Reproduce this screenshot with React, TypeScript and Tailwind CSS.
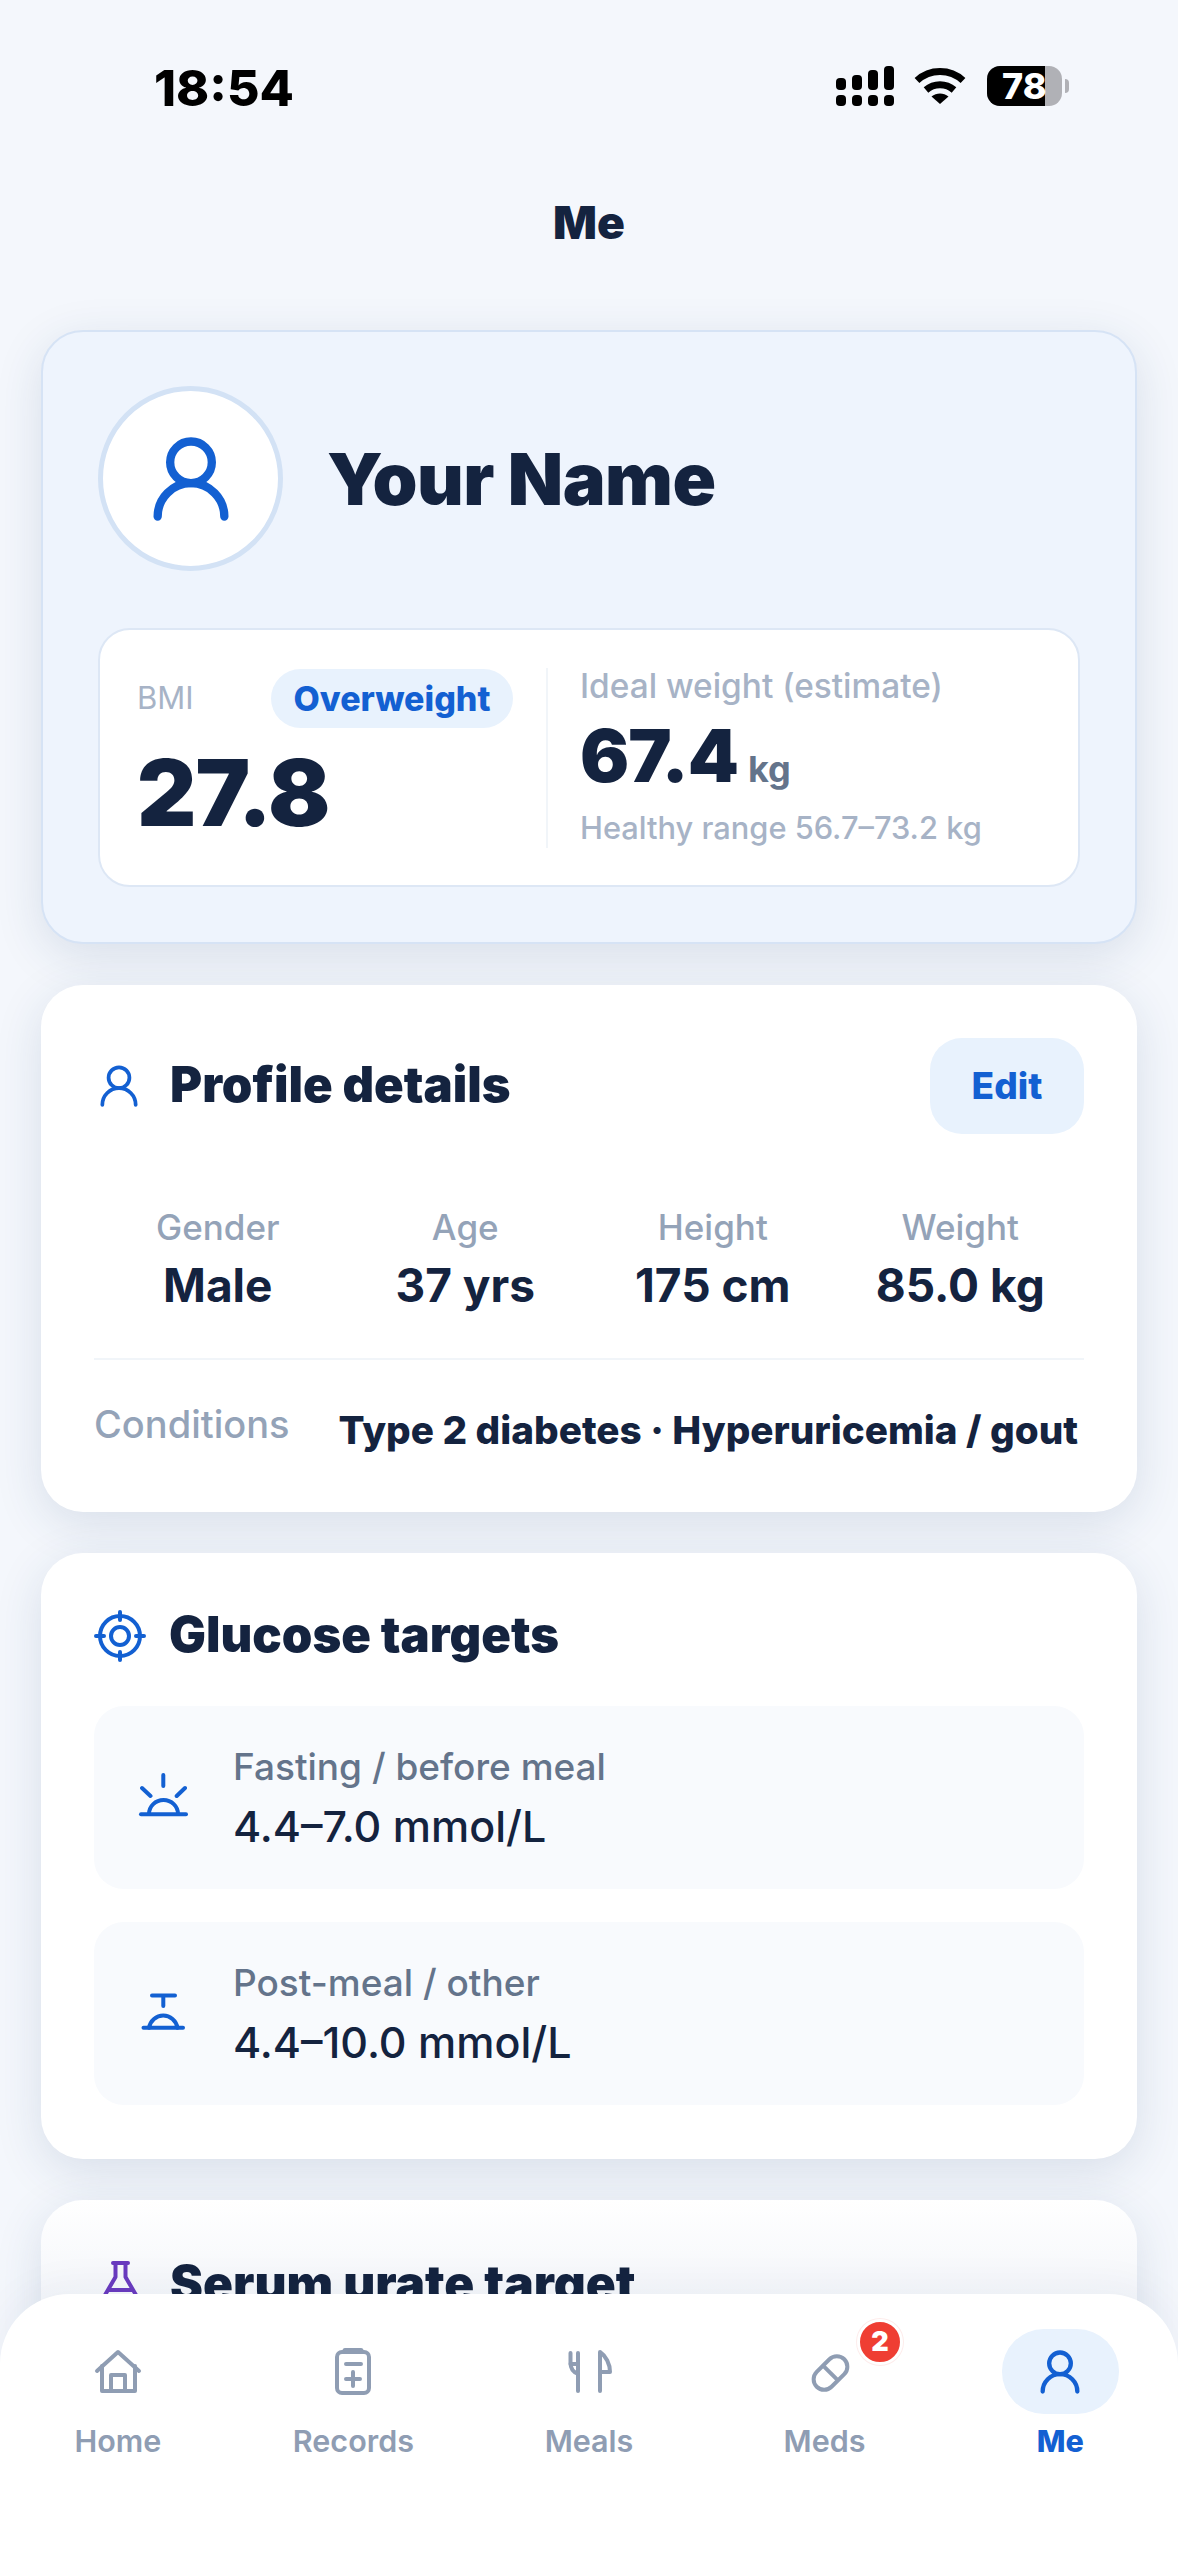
import { UserRound } from 'lucide-react';

function SignalIcon() {
  return (
    <svg width="58" height="40" viewBox="0 0 58 40" fill="#000">
      <rect x="0" y="12" width="10" height="12" rx="4" />
      <rect x="16" y="9" width="10" height="15" rx="4" />
      <rect x="32" y="4" width="10" height="20" rx="4" />
      <rect x="48" y="0" width="10" height="24" rx="4" />
      <rect x="0" y="29" width="10" height="11" rx="4" />
      <rect x="16" y="29" width="10" height="11" rx="4" />
      <rect x="32" y="29" width="10" height="11" rx="4" />
      <rect x="48" y="29" width="10" height="11" rx="4" />
    </svg>
  );
}

function WifiIcon() {
  return (
    <svg width="52" height="38" viewBox="0 0 52 38" fill="none" stroke="#000" strokeWidth="7">
      <path d="M3 13.5C16 1.5 36 1.5 49 13.5" />
      <path d="M12 23C20 16 32 16 40 23" />
      <path d="M26 37L17.5 29.5C22.5 25.5 29.5 25.5 34.5 29.5Z" fill="#000" stroke="none" />
    </svg>
  );
}

function GlucoseIcon() {
  return (
    <svg width="52" height="52" viewBox="0 0 52 52" fill="none" stroke="#1360d2" strokeWidth="4" strokeLinecap="round">
      <circle cx="26" cy="26" r="20" />
      <circle cx="26" cy="26" r="9" />
      <path d="M26 2V10M26 42V50M2 26H10M42 26H50" />
    </svg>
  );
}

function SunriseIcon() {
  return (
    <svg width="50" height="50" viewBox="0 0 50 50" fill="none" stroke="#1360d2" strokeWidth="4" strokeLinecap="round">
      <path d="M25.3 2V13M4 15L12.5 23M47 15L38.7 23" />
      <path d="M11 41A14.5 14 0 0 1 40 41" />
      <path d="M3 41.3H48" />
    </svg>
  );
}

function PostMealIcon() {
  return (
    <svg width="50" height="50" viewBox="0 0 50 50" fill="none" stroke="#1360d2" strokeWidth="4" strokeLinecap="round">
      <path d="M14 6.5H37M25.3 6.5V17" />
      <path d="M11 38.8A14.5 15 0 0 1 39.5 38.8" />
      <path d="M5.5 38.8H45" />
    </svg>
  );
}

function FlaskIcon() {
  return (
    <svg width="48" height="48" viewBox="0 0 48 48" fill="none" stroke="#6a3bbf" strokeWidth="4" strokeLinecap="round" strokeLinejoin="round">
      <path d="M17 3H32M19.5 3V17L9 35Q7 41 12 42H37Q42 41 40 35L29.5 17V3" />
      <path d="M13 30H36" />
    </svg>
  );
}

const navStroke = '#8f9db3';

function HomeIcon() {
  return (
    <svg width="52" height="52" viewBox="0 0 52 52" fill="none" stroke={navStroke} strokeWidth="4" strokeLinecap="round" strokeLinejoin="round">
      <path d="M5 25L26 6L47 25" />
      <path d="M10 20V45H43V20" />
      <path d="M19 45V29H33V45" />
    </svg>
  );
}

function RecordsIcon() {
  return (
    <svg width="52" height="52" viewBox="0 0 52 52" fill="none" stroke={navStroke} strokeWidth="4" strokeLinecap="round" strokeLinejoin="round">
      <rect x="10" y="6" width="32" height="41" rx="5" />
      <path d="M18 4.5H34" strokeWidth="5" />
      <path d="M19 18H34M26 26V40M19 33H33" />
    </svg>
  );
}

function MealsIcon() {
  return (
    <svg width="52" height="52" viewBox="0 0 52 52" fill="none" stroke={navStroke} strokeWidth="4" strokeLinecap="round" strokeLinejoin="round">
      <path d="M15 7V45" />
      <path d="M7.5 7V17C7.5 22 10 26 15 28" />
      <path d="M7.5 18H15" />
      <path d="M37 45V6C43 10 47 18 47 26H37" />
    </svg>
  );
}

function PillIcon() {
  return (
    <svg width="52" height="52" viewBox="0 0 52 52" fill="none" stroke={navStroke} strokeWidth="4">
      <g transform="rotate(-45 31.5 27)">
        <rect x="12" y="16.5" width="39" height="21" rx="10.5" />
        <path d="M31.5 16.5V37.5" />
      </g>
    </svg>
  );
}

function StatCell({ label, value }: { label: string; value: string }) {
  return (
    <div className="flex flex-col items-center">
      <div className="text-[35px] leading-[42px] font-medium text-[#94a3b8]">{label}</div>
      <div className="mt-[16px] text-[46px] leading-[42px] font-bold text-[#14233f]">{value}</div>
    </div>
  );
}

function TargetRow({ icon, label, value }: { icon: React.ReactNode; label: string; value: string }) {
  return (
    <div className="h-[183px] rounded-[30px] bg-[#f8fafd] flex items-center pl-[44px]">
      <div className="w-[50px] shrink-0">{icon}</div>
      <div className="ml-[45px] pb-[3px]">
        <div className="text-[37px] leading-[44px] font-medium text-[#64748b]">{label}</div>
        <div className="mt-[15px] text-[43px] leading-[44px] font-medium text-[#14233f]">{value}</div>
      </div>
    </div>
  );
}

function NavItem({ icon, label, active }: { icon: React.ReactNode; label: string; active?: boolean }) {
  return (
    <div className="flex flex-col items-center">
      <div className={`relative w-[117px] h-[85px] rounded-[42px] flex items-center justify-center ${active ? 'bg-[#e8f2fd]' : ''}`}>
        {icon}
      </div>
      <div className={`mt-[8px] text-[30.5px] leading-[38px] ${active ? 'font-extrabold text-[#1360d2]' : 'font-semibold text-[#8f9db3]'}`}>
        {label}
      </div>
    </div>
  );
}

export default function App() {
  const cardShadow = 'shadow-[0_12px_48px_rgba(30,60,110,0.13)]';

  return (
    <div className="relative w-[1178px] h-[2560px] overflow-hidden bg-[#f4f7fc] font-[Inter,sans-serif] text-[#14233f]">
      {/* Status bar */}
      <div className="flex items-start justify-between pt-[66px] pl-[154px] pr-[109px]">
        <div className="text-[50px] leading-[44px] font-extrabold text-black">18:54</div>
        <div className="flex items-center">
          <SignalIcon />
          <div className="ml-[20px]">
            <WifiIcon />
          </div>
          <div className="ml-[21px] relative w-[75px] h-[40px] rounded-[13px] bg-[#b0b1b6]">
            <div className="w-[58px] h-full rounded-l-[13px] bg-black" />
            <div className="absolute left-[15px] top-0 text-[36px] leading-[40px] font-extrabold text-white">78</div>
          </div>
          <div className="ml-[3px] w-[4px] h-[14px] rounded-r-full bg-[#b0b1b6]" />
        </div>
      </div>

      {/* Title */}
      <div className="mt-[84px] mb-[80px] text-center text-[46px] leading-[56px] font-black">Me</div>

      <div className="px-[41px] flex flex-col gap-[41px]">
        {/* Summary */}
        <div className={`rounded-[42px] border-2 border-[#d6e3f5] bg-[#eef4fd] px-[55px] pt-[54px] pb-[55px] ${cardShadow}`}>
          <div className="flex items-center">
            <div className="w-[185px] h-[185px] rounded-full border-[5px] border-[#d3e2f5] bg-white flex items-center justify-center">
              <UserRound size={100} strokeWidth={2} color="#1360d2" />
            </div>
            <div className="ml-[44px] text-[72px] leading-[84px] font-black tracking-[-0.5px]">Your Name</div>
          </div>
          <div className="mt-[57px] h-[259px] rounded-[32px] border-2 border-[#dde7f5] bg-white flex items-center pl-[37px]">
            <div className="w-[411px] h-[180px] border-r-2 border-[#f1f5f9] pr-[33px]">
              <div className="flex items-center justify-between pt-[1px]">
                <div className="text-[31px] leading-[40px] text-[#a7b3c6]">BMI</div>
                <div className="h-[59px] w-[242px] rounded-full bg-[#e8f2fd] flex items-center justify-center text-[34px] font-extrabold text-[#1360d2]">
                  Overweight
                </div>
              </div>
              <div className="mt-[20px] text-[92px] leading-[90px] font-black tracking-[-1px]">27.8</div>
            </div>
            <div className="pl-[32px] h-[180px] -mt-[2px]">
              <div className="text-[33.4px] leading-[38px] font-medium text-[#a7b3c6]">Ideal weight (estimate)</div>
              <div className="mt-[15px] flex items-baseline">
                <span className="text-[73px] leading-[72px] font-black tracking-[-1px]">67.4</span>
                <span className="ml-[10px] text-[36px] leading-[40px] font-bold text-[#64748b]">kg</span>
              </div>
              <div className="mt-[17px] text-[30.8px] leading-[38px] font-medium text-[#a7b3c6]">Healthy range 56.7–73.2 kg</div>
            </div>
          </div>
        </div>

        {/* Profile */}
        <div className={`h-[527px] rounded-[42px] bg-white pl-[53px] pr-[53px] pt-[53px] ${cardShadow}`}>
          <div className="flex items-center justify-between">
            <div className="flex items-center">
              <UserRound size={50} strokeWidth={1.8} color="#1360d2" />
              <div className="ml-[26px] pb-[2px] text-[49px] leading-[60px] font-black">Profile details</div>
            </div>
            <div className="w-[154px] h-[96px] rounded-[32px] bg-[#e8f2fd] flex items-center justify-center text-[37px] font-extrabold text-[#1360d2]">
              Edit
            </div>
          </div>
          <div className="mt-[72px] grid grid-cols-4">
            <StatCell label="Gender" value="Male" />
            <StatCell label="Age" value="37 yrs" />
            <StatCell label="Height" value="175 cm" />
            <StatCell label="Weight" value="85.0 kg" />
          </div>
          <div className="mt-[52px] border-t-2 border-[#f1f5f9]" />
          <div className="mt-[42px] flex items-start justify-between">
            <div className="text-[38px] leading-[44px] font-medium text-[#94a3b8]">Conditions</div>
            <div className="mt-[6px] pr-[6px] text-[38.7px] leading-[44px] font-extrabold">Type 2 diabetes · Hyperuricemia / gout</div>
          </div>
        </div>

        {/* Glucose */}
        <div className={`h-[606px] rounded-[42px] bg-white pl-[53px] pr-[53px] pt-[52px] ${cardShadow}`}>
          <div className="flex items-center">
            <GlucoseIcon />
            <div className="ml-[23px] pb-[2px] text-[49px] leading-[60px] font-black">Glucose targets</div>
          </div>
          <div className="mt-[39px] flex flex-col gap-[33px]">
            <TargetRow icon={<SunriseIcon />} label="Fasting / before meal" value="4.4–7.0 mmol/L" />
            <TargetRow icon={<PostMealIcon />} label="Post-meal / other" value="4.4–10.0 mmol/L" />
          </div>
        </div>

        {/* Serum urate, runs under the tab bar */}
        <div className={`h-[400px] rounded-[42px] bg-[linear-gradient(#ffffff,#f4f6fa_96px)] pl-[55px] pt-[53px] ${cardShadow}`}>
          <div className="flex items-center">
            <FlaskIcon />
            <div className="ml-[26px] pb-[2px] text-[49.5px] leading-[60px] font-black">Serum urate target</div>
          </div>
        </div>
      </div>

      {/* Tab bar */}
      <div className="absolute left-0 right-0 bottom-0 top-[2294px] rounded-t-[70px] bg-white pt-[35px] grid grid-cols-5 shadow-[0_-10px_40px_rgba(30,60,110,0.04)]">
        <NavItem icon={<HomeIcon />} label="Home" />
        <NavItem icon={<RecordsIcon />} label="Records" />
        <NavItem icon={<MealsIcon />} label="Meals" />
        <NavItem
          label="Meds"
          icon={
            <>
              <PillIcon />
              <div className="absolute left-[91px] top-[-10px] w-[46px] h-[46px] rounded-full border-[3px] border-white bg-[#ef3e33] shadow-[0_0_0_1px_#fdeceb] flex items-center justify-center text-[27px] font-black text-white">
                2
              </div>
            </>
          }
        />
        <NavItem icon={<UserRound size={52} strokeWidth={2} color="#1360d2" />} label="Me" active />
      </div>
    </div>
  );
}
